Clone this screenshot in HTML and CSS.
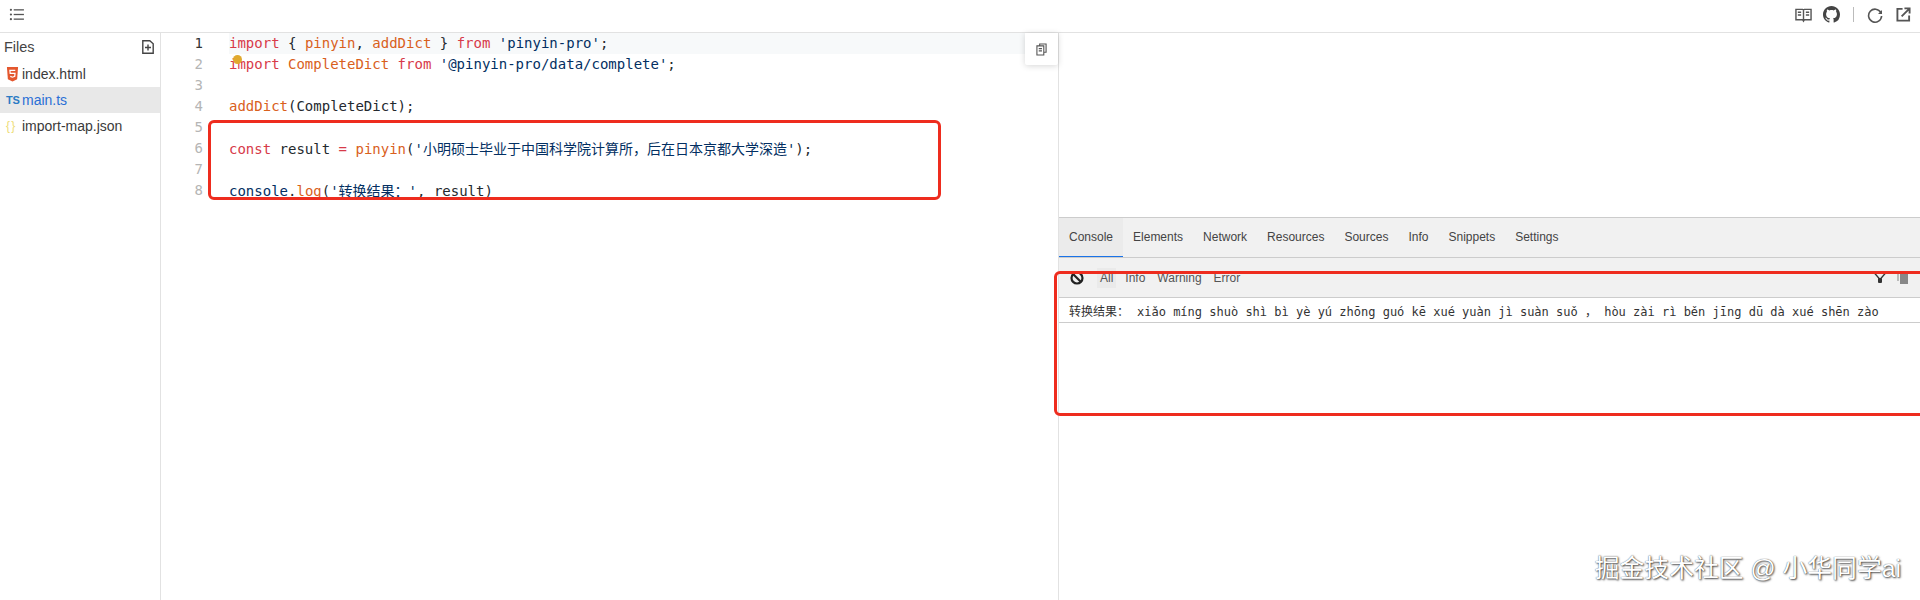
FILE: index.html
```html
<!DOCTYPE html>
<html lang="zh">
<head>
<meta charset="utf-8">
<title>Playground</title>
<link rel="stylesheet" href="styles.css">
</head>
<body>
<div class="app">
  <header class="topbar">
    <svg class="ic-list" viewBox="0 0 16 14" width="15" height="13"><g fill="#555"><circle cx="2" cy="2" r="1.2"/><circle cx="2" cy="7" r="1.2"/><circle cx="2" cy="12" r="1.2"/><rect x="5" y="1.300" width="11" height="1.400"/><rect x="5" y="6.300" width="11" height="1.400"/><rect x="5" y="11.300" width="11" height="1.400"/></g></svg>
    <div class="top-actions">
      <svg class="book" viewBox="0 0 18 16" width="17" height="16"><path d="M1 2h7l1 1 1-1h7v11h-7l-1 1.5L8 13H1zM9 3v10M3 5h3.500M3 8h3.500M11.500 5H15M11.500 8H15" fill="none" stroke="#555" stroke-width="1.500"/></svg>
      <svg class="gh" viewBox="0 0 16 16" width="17" height="17"><path fill="#444" d="M8 0C3.58 0 0 3.58 0 8c0 3.540 2.290 6.530 5.470 7.590.4.070.55-.17.55-.38 0-.19-.01-.82-.01-1.490-2.010.37-2.530-.49-2.690-.94-.09-.23-.48-.94-.82-1.130-.28-.15-.68-.52-.01-.53.630-.01 1.080.58 1.230.82.720 1.210 1.870.87 2.330.66.070-.52.280-.87.510-1.070-1.780-.2-3.640-.89-3.640-3.950 0-.87.310-1.590.820-2.150-.08-.2-.36-1.020.08-2.120 0 0 .67-.21 2.200.82.640-.18 1.320-.27 2-.27s1.360.09 2 .27c1.530-1.040 2.200-.82 2.200-.82.440 1.100.160 1.920.080 2.120.510.560.820 1.270.820 2.150 0 3.070-1.870 3.750-3.650 3.950.290.250.540.730.540 1.480 0 1.070-.01 1.930-.01 2.200 0 .210.150.460.550.380A8.010 8.010 0 0 0 16 8c0-4.420-3.580-8-8-8z"/></svg>
      <span class="vsep"></span>
      <svg viewBox="0 0 16 16" width="16" height="16"><path d="M13.800 5.500A6.500 6.500 0 1 0 14.600 9" fill="none" stroke="#555" stroke-width="1.600"/><path d="M15 3v4h-4z" fill="#555"/></svg>
      <svg class="ext" viewBox="0 0 16 16" width="15" height="15"><path d="M7 2H1.500v12.500H14V9" fill="none" stroke="#555" stroke-width="2"/><path d="M6 10l7.500-7.500M9 1.500h5.500V7" fill="none" stroke="#555" stroke-width="2"/></svg>
    </div>
  </header>
  <div class="main">
    <aside class="files">
      <div class="files-head">
        <span>Files</span>
        <svg viewBox="0 0 12 14" width="12" height="14"><path d="M.8.8h7l3.400 3v9.400H.8z" fill="none" stroke="#444" stroke-width="1.400"/><path d="M6 4.500v6M3 7.500h6" stroke="#444" stroke-width="1.400"/></svg>
      </div>
      <div class="file">
        <svg class="fi" viewBox="0 0 14 16" width="13" height="15"><path d="M1 0h12l-1 13-5 2.500L2 13z" fill="#e4572e"/><path d="M10 3.500H4.200l.3 3.300H9.700l-.3 3.200-2.400.9-2.400-.9" fill="none" stroke="#fff" stroke-width="1.300"/></svg>
        <span>index.html</span>
      </div>
      <div class="file active">
        <span class="ts">TS</span>
        <span>main.ts</span>
      </div>
      <div class="file">
        <span class="json">{ }</span>
        <span>import-map.json</span>
      </div>
    </aside>
    <section class="editor">
      <div class="active-line"></div>
      <span class="bulb"></span>
      <button class="copy" type="button" aria-label="copy">
        <svg viewBox="0 0 12 14" width="11" height="13"><path d="M4 3V1h7v9H9M1 3h7.500v10H1zM3 6h3.500M3 8.500h3.500" fill="none" stroke="#555" stroke-width="1.200"/></svg>
      </button>
      <div class="code">
        <div class="ln on"><i>1</i><code><b class="k">import</b> { <b class="f">pinyin</b>, <b class="f">addDict</b> } <b class="k">from</b> <b class="s">'pinyin-pro'</b>;</code></div>
        <div class="ln"><i>2</i><code><b class="k">import</b> <b class="f">CompleteDict</b> <b class="k">from</b> <b class="s">'@pinyin-pro/data/complete'</b>;</code></div>
        <div class="ln"><i>3</i><code></code></div>
        <div class="ln"><i>4</i><code><b class="f">addDict</b>(CompleteDict);</code></div>
        <div class="ln"><i>5</i><code></code></div>
        <div class="ln"><i>6</i><code><b class="k">const</b> result <b class="k">=</b> <b class="f">pinyin</b>(<b class="s">'小明硕士毕业于中国科学院计算所，后在日本京都大学深造'</b>);</code></div>
        <div class="ln"><i>7</i><code></code></div>
        <div class="ln"><i>8</i><code><b class="s">console</b>.<b class="f">log</b>(<b class="s">'转换结果：'</b>, result)</code></div>
      </div>
    </section>
    <section class="preview">
      <div class="blank"></div>
      <nav class="tabs">
        <span class="tab active">Console</span><span class="tab">Elements</span><span class="tab">Network</span><span class="tab">Resources</span><span class="tab">Sources</span><span class="tab">Info</span><span class="tab">Snippets</span><span class="tab">Settings</span>
      </nav>
      <div class="filters">
        <svg class="ban" viewBox="0 0 14 14" width="14" height="14"><circle cx="7" cy="7" r="5.500" fill="none" stroke="#222" stroke-width="2.200"/><path d="M3 3l8 8" stroke="#222" stroke-width="2.200"/></svg>
        <span class="fl first">All</span><span class="fl">Info</span><span class="fl">Warning</span><span class="fl">Error</span>
        <div class="fl-icons">
          <svg viewBox="0 0 14 14" width="14" height="14"><path d="M1 1.500l6 7 6-7" fill="none" stroke="#333" stroke-width="1.300"/><rect x="5" y="7" width="4" height="5" rx="1" fill="#333"/></svg>
          <svg viewBox="0 0 12 14" width="12" height="14"><rect x="0" y="1" width="2" height="9" fill="#bbb"/><rect x="3" y="3" width="8" height="10" fill="#888"/></svg>
        </div>
      </div>
      <div class="log"><span class="log-key">转换结果：</span><span>xiǎo míng shuò shì bì yè yú zhōng guó kē xué yuàn jì suàn suǒ ，&nbsp;hòu zài rì běn jīng dū dà xué shēn zào</span></div>
    </section>
  </div>
  <div class="mark mark-code"></div>
  <div class="mark mark-console"></div>
  <div class="watermark">掘金技术社区 @ 小华同学ai</div>
</div>
</body>
</html>
```

FILE: styles.css
```css
* { box-sizing: border-box; }
html, body { margin: 0; height: 100%; overflow: hidden; background: #fff; }
.app {
  position: relative;
  width: 1920px;
  height: 600px;
  display: flex;
  flex-direction: column;
  font-family: "Liberation Sans", "Noto Sans CJK SC", sans-serif;
  color: #333;
}
.topbar {
  height: 33px;
  flex: none;
  display: flex;
  align-items: center;
  justify-content: space-between;
  padding: 0 9px 3px 9px;
  border-bottom: 1px solid #e2e2e2;
}
.top-actions { display: flex; align-items: center; gap: 13px; }
.book { margin-right: -2px; }
.vsep { width: 1px; height: 15px; background: #bbb; }
.main { flex: 1; display: flex; min-height: 0; }
.files { width: 161px; flex: none; border-right: 1px solid #e2e2e2; }
.files-head {
  height: 28px;
  display: flex;
  align-items: center;
  justify-content: space-between;
  padding: 0 6px 0 4px;
  font-size: 14.500px;
  color: #444;
}
.file {
  height: 26px;
  display: flex;
  align-items: center;
  gap: 3px;
  padding-left: 6px;
  font-size: 14px;
  color: #3a3a3a;
}
.file.active { background: #e8e8e8; color: #2a6fd6; }
.fi { flex: none; }
.ts { width: 13px; font-size: 11px; font-weight: 700; color: #2b7bc4; letter-spacing: -.3px; }
.json { width: 13px; font-size: 12px; color: #eedd77; white-space: nowrap; letter-spacing: -1px; }
.editor { position: relative; width: 898px; flex: none; border-right: 1px solid #e2e2e2; }
.active-line { position: absolute; left: 68px; right: 0; top: 0; height: 21px; background: #f7f9fa; }
.bulb { position: absolute; left: 72px; top: 22px; width: 9px; height: 9px; border-radius: 50%; background: #e0a92e; z-index: 2; }
.copy {
  position: absolute;
  right: 0;
  top: 0;
  width: 33px;
  height: 32px;
  padding: 0;
  border: 0;
  border-radius: 0 0 2px 2px;
  background: #fff;
  box-shadow: 0 1px 6px rgba(0, 0, 0, .16);
  display: flex;
  align-items: center;
  justify-content: center;
  z-index: 2;
}
.code { position: relative; font-family: "DejaVu Sans Mono", "Noto Sans CJK SC", monospace; font-size: 14px; }
.ln { height: 21px; padding-bottom: 1px; display: flex; align-items: center; }
.ln i { width: 42px; margin-right: 26px; text-align: right; font-style: normal; color: #b5b5b5; flex: none; }
.ln.on i { color: #333; }
.ln code { font: inherit; color: #24292e; white-space: pre; }
.ln b { font-weight: 400; }
.k { color: #d73a49; }
.f { color: #d9601c; }
.s { color: #032f62; }
.preview { flex: 1; display: flex; flex-direction: column; min-width: 0; }
.blank { height: 184px; flex: none; }
.tabs {
  height: 41px;
  flex: none;
  display: flex;
  background: #f1f1f1;
  border-top: 1px solid #ccc;
  border-bottom: 1px solid #ccc;
  font-size: 12px;
  color: #444;
}
.tab { display: flex; align-items: center; padding: 0 10px 1px; }
.tab.active { background: #ebebeb; box-shadow: inset 0 -1px 0 #1a73e8; }
.filters {
  height: 40px;
  flex: none;
  display: flex;
  align-items: center;
  padding: 0 11px;
  background: #f1f1f1;
  border-bottom: 1px solid #ccc;
  font-size: 12px;
  color: #555;
}
.ban { margin-right: 13px; }
.fl { padding: 3px 3px; margin-right: 6px; line-height: 14px; }
.fl.first { background: #eaeaea; }
.fl-icons { margin-left: auto; display: flex; gap: 10px; align-items: center; }
.log {
  height: 25px;
  flex: none;
  display: flex;
  align-items: center;
  padding-left: 10px;
  border-bottom: 1px solid #ccc;
  font-family: "DejaVu Sans Mono", "Noto Sans CJK SC", monospace;
  font-size: 12px;
  color: #333;
  white-space: pre;
}
.log-key { margin-right: 8px; }
.mark { position: absolute; border: 3px solid #ee2c1e; pointer-events: none; z-index: 3; }
.mark-code { left: 208px; top: 120px; width: 733px; height: 80px; border-radius: 6px; }
.mark-console { left: 1054px; top: 271px; width: 900px; height: 145px; border-radius: 6px; }
.watermark {
  position: absolute;
  right: 19px;
  bottom: 16px;
  font-size: 24.800px;
  color: #fff;
  text-shadow: 0 0 1px rgba(0, 0, 0, .7), 1px 1px 2px rgba(0, 0, 0, .7);
  white-space: nowrap;
  z-index: 4;
}
```
